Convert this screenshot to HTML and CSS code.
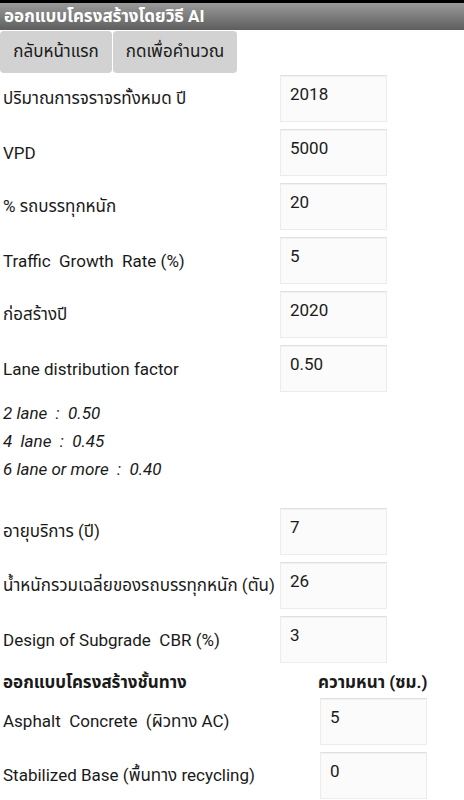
FILE: index.html
```html
<!DOCTYPE html>
<html lang="th">
<head>
<meta charset="utf-8">
<title>ออกแบบโครงสร้างโดยวิธี AI</title>
<link rel="stylesheet" href="styles.css">
</head>
<body>
<div class="statusbar"></div>
<div class="titlebar">ออกแบบโครงสร้างโดยวิธี AI</div>
<div class="toolbar">
  <button class="btn">กลับหน้าแรก</button>
  <button class="btn">กดเพื่อคำนวณ</button>
</div>
<div class="form">
  <div class="row"><span class="label">ปริมาณการจราจรทั้งหมด ปี</span><div class="field">2018</div></div>
  <div class="row"><span class="label">VPD</span><div class="field">5000</div></div>
  <div class="row"><span class="label">% รถบรรทุกหนัก</span><div class="field">20</div></div>
  <div class="row"><span class="label">Traffic&nbsp; Growth&nbsp; Rate (%)</span><div class="field">5</div></div>
  <div class="row"><span class="label">ก่อสร้างปี</span><div class="field">2020</div></div>
  <div class="row"><span class="label">Lane distribution factor</span><div class="field">0.50</div></div>
  <div class="notes">
    <div>2 lane&nbsp; :&nbsp; 0.50</div>
    <div>4&nbsp; lane&nbsp; :&nbsp; 0.45</div>
    <div>6 lane or more&nbsp; :&nbsp; 0.40</div>
  </div>
  <div class="row"><span class="label">อายุบริการ (ปี)</span><div class="field">7</div></div>
  <div class="row"><span class="label">น้ำหนักรวมเฉลี่ยของรถบรรทุกหนัก (ตัน)</span><div class="field">26</div></div>
  <div class="row"><span class="label">Design of Subgrade&nbsp; CBR (%)</span><div class="field">3</div></div>
</div>
<div class="layers">
  <div class="layer-head"><span>ออกแบบโครงสร้างชั้นทาง</span><span>ความหนา (ซม.)</span></div>
  <div class="layer-row"><span class="label">Asphalt&nbsp; Concrete&nbsp; (ผิวทาง AC)</span><div class="field">5</div></div>
  <div class="layer-row"><span class="label">Stabilized Base (พื้นทาง recycling)</span><div class="field">0</div></div>
</div>
</body>
</html>
```
FILE: styles.css
```css
* { box-sizing: border-box; }
html, body { margin: 0; padding: 0; background: #ffffff; }
body {
  font-family: Roboto, "Noto Sans", "Noto Sans Thai", "DejaVu Sans", sans-serif;
  font-size: 17px;
  color: #1a1a1a;
  width: 464px;
  height: 800px;
  overflow: hidden;
}
.statusbar { height: 3px; background: #000; }
.titlebar {
  height: 27px;
  background: linear-gradient(#9a9a9a, #5e5e5e);
  color: #fff;
  font-weight: bold;
  font-size: 17px;
  line-height: 27px;
  padding-left: 4px;
}
.toolbar {
  display: flex;
  gap: 1px;
  margin-top: 1px;
}
.btn {
  height: 42px;
  background: #d2d2d2;
  border: none;
  border-radius: 4px;
  font-family: inherit;
  font-size: 17px;
  color: #1a1a1a;
  padding: 0 10px;
  white-space: nowrap;
}
.btn:first-child { width: 112px; }
.btn:last-child { width: 124px; }
.form { padding-top: 2px; }
.row {
  display: grid;
  grid-template-columns: 280px 107px;
  height: 47px;
  align-items: center;
  margin-bottom: 7px;
}
.label { padding-left: 3px; white-space: nowrap; }
.field {
  align-self: stretch;
  background: #fbfbfb;
  border: 1px solid #ececec;
  border-top-color: #e0e0e0;
  box-shadow: inset 0 1px 1px rgba(0,0,0,0.04);
  padding: 8px 9px;
  line-height: 20px;
}
.notes {
  font-style: italic;
  font-size: 17px;
  line-height: 28px;
  padding-left: 3px;
  height: 109px;
}
.layers { margin-top: -3px; }
.layer-head {
  display: grid;
  grid-template-columns: 315px auto;
  font-weight: bold;
  height: 31px;
  align-items: center;
  padding-left: 3px;
}
.layer-row {
  display: grid;
  grid-template-columns: 320px 107px;
  height: 47px;
  align-items: center;
  margin-bottom: 7px;
}
```
